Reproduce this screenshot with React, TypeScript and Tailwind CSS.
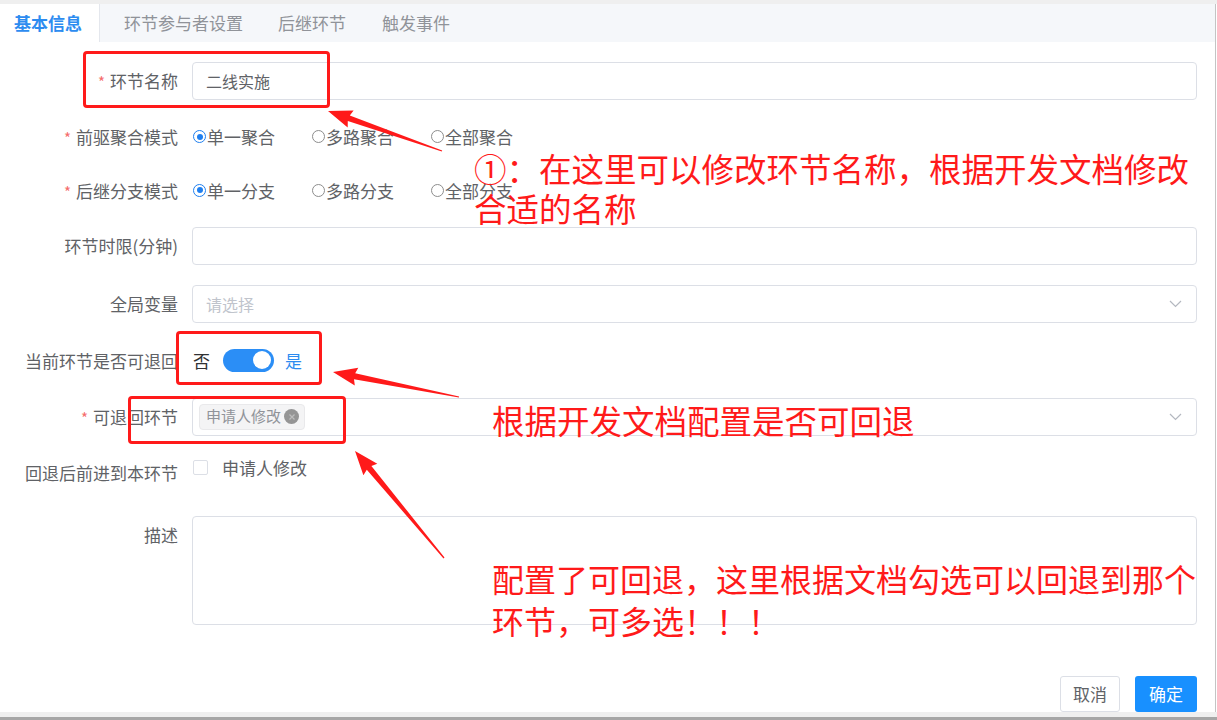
import type { ReactNode } from "react";

const font = "font-['Noto_Sans_CJK_SC','Noto_Sans',sans-serif]";
const labelCls = "w-[192px] shrink-0 pr-[14px] text-right text-[17px] text-[#606266]";
const inputCls = "h-[38px] flex-1 rounded-[4px] border border-[#dcdfe6] bg-white";

function Label({ children, required }: { children: ReactNode; required?: boolean }) {
  return (
    <div className={labelCls}>
      {required && <span className="mr-[5px] text-[15px] text-[#f56c6c]">*</span>}
      {children}
    </div>
  );
}

function Radio({ checked, label }: { checked?: boolean; label: string }) {
  return (
    <span className="mr-[37px] inline-flex items-center">
      {checked ? (
        <span className="flex h-[13px] w-[13px] items-center justify-center rounded-full border-[1.5px] border-[#1f7fef] bg-white">
          <span className="h-[6px] w-[6px] rounded-full bg-[#1f7fef]" />
        </span>
      ) : (
        <span className="h-[13px] w-[13px] rounded-full border border-[#8d8d8d] bg-white" />
      )}
      <span className="ml-px">{label}</span>
    </span>
  );
}

function Chevron() {
  return (
    <svg width="13" height="8" viewBox="0 0 13 8" className="mr-[14px]">
      <path d="M1 1l5.5 5.5L12 1" fill="none" stroke="#b4b8c0" strokeWidth="1.2" />
    </svg>
  );
}

// tapered annotation arrow from tail (x1,y1) to tip (x2,y2)
function arrowPoints(x1: number, y1: number, x2: number, y2: number) {
  const dx = x2 - x1;
  const dy = y2 - y1;
  const len = Math.hypot(dx, dy);
  const ux = dx / len;
  const uy = dy / len;
  const nx = -uy;
  const ny = ux;
  const head = 22;
  const hx = x2 - ux * head;
  const hy = y2 - uy * head;
  const pts = [
    [x1 + nx * 0.6, y1 + ny * 0.6],
    [hx + nx * 3, hy + ny * 3],
    [hx - ux * 2 + nx * 9, hy - uy * 2 + ny * 9],
    [x2, y2],
    [hx - ux * 2 - nx * 9, hy - uy * 2 - ny * 9],
    [hx - nx * 3, hy - ny * 3],
    [x1 - nx * 0.6, y1 - ny * 0.6],
  ];
  return pts.map((p) => p.map((v) => v.toFixed(1)).join(",")).join(" ");
}

const arrows = [
  [442, 151, 328, 111],
  [459, 397, 333, 372],
  [444, 558, 355, 451],
];

export default function App() {
  return (
    <div className={`relative flex h-[720px] w-[1217px] flex-col overflow-hidden bg-white ${font}`}>
      <div className="h-[4px] shrink-0 bg-[#efefef]" />

      <div className="flex min-h-0 flex-1">
        <div className="flex w-[1215px] flex-col">
          {/* tabs */}
          <div className="flex h-[38px] shrink-0 items-stretch bg-[#f5f7fa] text-[17px] text-[#909399]">
            <div className="flex w-[100px] items-center border-r border-[#e4e7ed] bg-white pl-[14px] font-semibold text-[#2d8cf0]">
              基本信息
            </div>
            <div className="flex items-center pl-[24px]">环节参与者设置</div>
            <div className="flex items-center pl-[35px]">后继环节</div>
            <div className="flex items-center pl-[36px]">触发事件</div>
          </div>

          {/* form */}
          <div className="flex min-h-0 flex-1 flex-col overflow-hidden pt-[20px] pr-[18px]">
            <div className="mb-[20px] flex items-center">
              <Label required>环节名称</Label>
              <div className={`${inputCls} flex items-center pl-[13px] text-[16px] text-[#606266]`}>二线实施</div>
            </div>

            <div className="mb-[20px] flex h-[35px] items-center">
              <Label required>前驱聚合模式</Label>
              <div className="flex items-center pl-px text-[17px] text-[#606266]">
                <Radio checked label="单一聚合" />
                <Radio label="多路聚合" />
                <Radio label="全部聚合" />
              </div>
            </div>

            <div className="mb-[20px] flex h-[35px] items-center">
              <Label required>后继分支模式</Label>
              <div className="flex items-center pl-px text-[17px] text-[#606266]">
                <Radio checked label="单一分支" />
                <Radio label="多路分支" />
                <Radio label="全部分支" />
              </div>
            </div>

            <div className="mb-[20px] flex items-center">
              <Label>环节时限(分钟)</Label>
              <div className={inputCls} />
            </div>

            <div className="mb-[20px] flex items-center">
              <Label>全局变量</Label>
              <div className={`${inputCls} flex items-center justify-between pl-[13px] text-[16px] text-[#c0c4cc]`}>
                请选择
                <Chevron />
              </div>
            </div>

            <div className="mb-[20px] flex h-[36px] items-center">
              <Label>当前环节是否可退回</Label>
              <div className="flex items-center text-[17px]">
                <span className="pl-px text-[#303133]">否</span>
                <span className="ml-[13px] flex h-[23px] w-[51px] items-center justify-end rounded-full bg-[#2b8ef6] pr-[3px]">
                  <span className="h-[18px] w-[18px] rounded-full bg-white" />
                </span>
                <span className="ml-[11px] text-[#2d8cf0]">是</span>
              </div>
            </div>

            <div className="mb-[20px] flex items-center">
              <Label required>可退回环节</Label>
              <div className={`${inputCls} flex items-center justify-between pl-[6px]`}>
                <span className="flex h-[26px] items-center rounded-[4px] border border-[#e9e9eb] bg-[#f4f4f5] pr-[5px] pl-[6px] text-[15px] text-[#909399]">
                  申请人修改
                  <span className="ml-[3px] flex h-[15px] w-[15px] items-center justify-center rounded-full bg-[#959595]">
                    <svg width="8" height="8" viewBox="0 0 8 8">
                      <path d="M1.5 1.5l5 5M6.5 1.5l-5 5" stroke="#bdbdbd" strokeWidth="1.2" />
                    </svg>
                  </span>
                </span>
                <Chevron />
              </div>
            </div>

            <div className="mb-[20px] flex h-[42px] items-start">
              <div className={`${labelCls} leading-[34px]`}>回退后前进到本环节</div>
              <div className="flex h-[24px] items-center text-[17px] text-[#606266]">
                <span className="ml-px h-[15px] w-[15px] rounded-[2px] border border-[#dcdfe6] bg-white" />
                <span className="ml-[14px]">申请人修改</span>
              </div>
            </div>

            <div className="flex items-start">
              <div className={`${labelCls} leading-[38px]`}>描述</div>
              <div className="h-[109px] flex-1 rounded-[4px] border border-[#dcdfe6]" />
            </div>

            <div className="mt-[51px] flex justify-end gap-[15px] text-[17px]">
              <button className="h-[36px] w-[60px] shrink-0 rounded-[3px] border border-[#dcdfe6] bg-white text-[#606266]">
                取消
              </button>
              <button className="h-[36px] w-[62px] shrink-0 rounded-[3px] bg-[#1890ff] text-white">确定</button>
            </div>
          </div>
        </div>
        <div className="w-px bg-[#c4c4c4]" />
        <div className="w-px bg-white" />
      </div>

      <div className="h-[5px] shrink-0 bg-[#efefef]" />
      <div className="h-[3px] shrink-0 bg-[#a6a6a6]" />

      {/* red annotations */}
      <div className="pointer-events-none absolute top-[51px] left-[83px] h-[57px] w-[247px] rounded-[4px] border-[3px] border-[#ff1a1a]" />
      <div className="pointer-events-none absolute top-[331px] left-[176px] h-[54px] w-[146px] rounded-[4px] border-[3px] border-[#ff1a1a]" />
      <div className="pointer-events-none absolute top-[396px] left-[128px] h-[48px] w-[218px] rounded-[4px] border-[3px] border-[#ff1a1a]" />

      <svg className="pointer-events-none absolute top-0 left-0" width="1217" height="720">
        {arrows.map(([a, b, c, d], i) => (
          <polygon key={i} points={arrowPoints(a, b, c, d)} fill="#ff1a1a" />
        ))}
      </svg>

      <div className="pointer-events-none absolute top-[148px] left-[474px] text-[32.5px] leading-[40px] text-[#ff1a1a]">
        <div>①：在这里可以修改环节名称，根据开发文档修改</div>
        <div>合适的名称</div>
      </div>
      <div className="pointer-events-none absolute top-[400px] left-[492px] text-[32.5px] leading-[40px] text-[#ff1a1a]">
        根据开发文档配置是否可回退
      </div>
      <div className="pointer-events-none absolute top-[557px] left-[492px] text-[32px] leading-[42px] text-[#ff1a1a]">
        <div>配置了可回退，这里根据文档勾选可以回退到那个</div>
        <div>环节，可多选！！！</div>
      </div>
    </div>
  );
}
